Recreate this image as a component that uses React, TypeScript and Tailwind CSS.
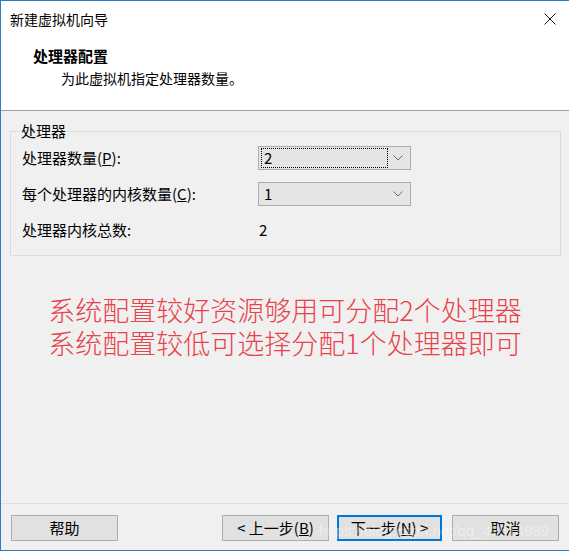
import React from 'react';

const ui = { fontFamily: '"Noto Sans CJK SC", "Liberation Sans", sans-serif' };

const Chevron = () => (
  <svg width="10" height="6" viewBox="0 0 10 6" className="shrink-0">
    <path d="M0.5 0.5 L5 5 L9.5 0.5" fill="none" stroke="#6d6d6d" strokeWidth="1" />
  </svg>
);

const Combo = ({ value, focused }: { value: string; focused?: boolean }) => (
  <div className="flex h-[24px] w-[153px] items-center border border-[#adadad] bg-[#e5e5e5] pr-[7px]">
    <div
      className={`ml-[2px] flex h-[20px] w-[127px] items-center pl-[2px] text-[15px] leading-[20px] text-black ${
        focused ? 'border border-dotted border-black' : 'border border-transparent'
      }`}
    >
      {value}
    </div>
    <div className="flex flex-1 justify-end">
      <Chevron />
    </div>
  </div>
);

const Btn = ({ children, primary }: { children: React.ReactNode; primary?: boolean }) => (
  <button
    className={`flex h-[26px] items-center justify-center bg-[#e1e1e1] text-[15px] leading-[20px] text-black ${
      primary ? 'w-[105px] border-2 border-[#0078d7]' : 'w-[107px] border border-[#adadad]'
    }`}
  >
    {children}
  </button>
);

const App = () => {
  return (
    <div
      className="relative flex h-[551px] w-[569px] flex-col border-t border-b border-l border-[#2d7dc4] bg-white"
      style={ui}
    >
      {/* Title bar */}
      <div className="flex h-[36px] items-center justify-between pl-[9px] pr-[13px]">
        <span className="text-[14px] leading-[20px] text-black">新建虚拟机向导</span>
        <svg width="12" height="12" viewBox="0 0 12 12">
          <path d="M0.5 0.5 L11.5 11.5 M11.5 0.5 L0.5 11.5" stroke="#1a1a1a" strokeWidth="1" />
        </svg>
      </div>

      {/* Header */}
      <div className="h-[74px] border-b border-[#a0a0a0] pt-[8px]">
        <div className="pl-[32px] text-[15px] font-bold leading-[22px] text-black">处理器配置</div>
        <div className="pl-[60px] text-[14px] leading-[22px] text-black">为此虚拟机指定处理器数量。</div>
      </div>

      {/* Body */}
      <div className="flex flex-1 flex-col bg-[#f0f0f0]">
        <fieldset className="ml-[9px] mr-[8px] mt-[10px] border border-[#dcdcdc] pb-[13px] pl-[11px] pt-[5px]">
          <legend className="-ml-[2px] px-[1px] text-[15px] leading-[20px] text-black">处理器</legend>
          <div className="grid grid-cols-[236px_153px] items-center gap-y-[12px] text-[15px] leading-[20px] text-black">
            <span>
              处理器数量(<span className="underline">P</span>):
            </span>
            <Combo value="2" focused />
            <span>
              每个处理器的内核数量(<span className="underline">C</span>):
            </span>
            <Combo value="1" />
            <span className="flex h-[24px] items-center">处理器内核总数:</span>
            <span className="pl-[1px]">2</span>
          </div>
        </fieldset>

        <div className="mt-[37px] flex flex-col items-center text-[27px] font-light leading-[33px] text-[#e8424b]">
          <span>系统配置较好资源够用可分配2个处理器</span>
          <span>系统配置较低可选择分配1个处理器即可</span>
        </div>
      </div>

      {/* Footer */}
      <div className="relative flex h-[47px] items-start border-t border-[#dfdfdf] bg-[#f0f0f0] pl-[10px] pt-[11px]">
        <Btn>帮助</Btn>
        <div className="ml-[104px] flex gap-[8px]">
          <Btn>
            &lt; 上一步(<span className="underline">B</span>)
          </Btn>
          <Btn primary>
            下一步(<span className="underline">N</span>) &gt;
          </Btn>
        </div>
        <div className="ml-[10px]">
          <Btn>取消</Btn>
        </div>
        <span
          className="pointer-events-none absolute left-[318px] top-[17px] text-[15px] leading-[20px] text-white/40"
          style={{ fontFamily: '"Liberation Sans", sans-serif' }}
        >
          https://blog.csdn.net/qq_43514989
        </span>
      </div>
    </div>
  );
};

export default App;
